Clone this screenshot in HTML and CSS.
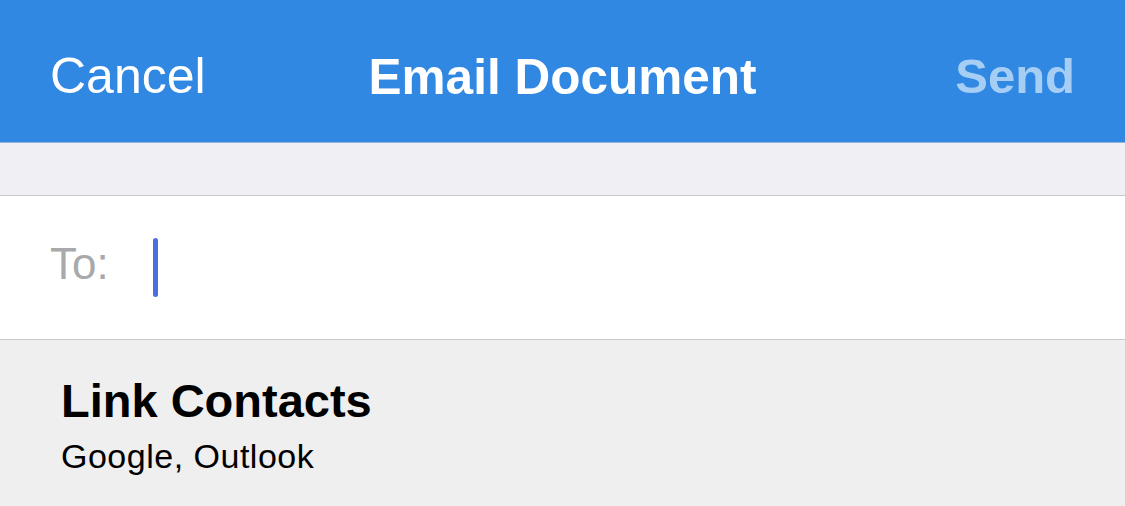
FILE: index.html
```html
<!DOCTYPE html>
<html lang="en">

<head>
  <meta charset="UTF-8">
  <meta name="viewport" content="width=device-width, initial-scale=1.0">
  <title>Email Document</title>
  <link rel="stylesheet" href="styles.css">
</head>

<body>
  <header class="nav-bar">
    <button class="nav-button cancel">Cancel</button>
    <h1 class="nav-title">Email Document</h1>
    <button class="nav-button send" disabled>Send</button>
  </header>

  <div class="spacer"></div>

  <div class="to-row">
    <span class="to-label">To:</span>
    <span class="cursor"></span>
  </div>

  <div class="suggestion">
    <div class="suggestion-title">Link Contacts</div>
    <div class="suggestion-sub">Google, Outlook</div>
  </div>
</body>

</html>
```

FILE: styles.css
```css
body {
  margin: 0;
  padding: 0;
  background-color: #efefef;
  font-family: 'Liberation Sans', Arial, sans-serif;
  color: #000;
}

.nav-bar {
  height: 143px;
  box-sizing: border-box;
  padding: 10px 50px 0 50px;
  background-color: #3088e3;
  border-bottom: 1px solid #8fb4dc;
  display: grid;
  grid-template-columns: 1fr auto 1fr;
  align-items: center;
}

.nav-button {
  background: none;
  border: none;
  padding: 0;
  color: #fff;
  font-family: inherit;
  font-size: 50px;
}

.nav-button.cancel {
  justify-self: start;
}

.nav-button.send {
  justify-self: end;
  color: #a6cef5;
  font-weight: bold;
  font-size: 49px;
}

.nav-title {
  margin: 0;
  color: #fff;
  font-size: 49.5px;
  font-weight: bold;
}

.spacer {
  height: 52px;
  background-color: #efeff4;
  border-bottom: 1px solid #c8c7cc;
}

.to-row {
  height: 144px;
  box-sizing: border-box;
  padding: 0 50px;
  background-color: #fff;
  border-bottom: 1px solid #c8c7cc;
  display: flex;
  align-items: center;
  gap: 44px;
}

.to-label {
  color: #a9a9ab;
  font-size: 44px;
  margin-top: -8px;
}

.cursor {
  width: 5px;
  height: 59px;
  border-radius: 3px;
  background-color: #4a6fe3;
}

.suggestion {
  padding: 34px 61px;
}

.suggestion-title {
  font-size: 47px;
  font-weight: bold;
  line-height: 54px;
}

.suggestion-sub {
  font-size: 34px;
  line-height: 42px;
  margin-top: 7px;
  letter-spacing: 0.5px;
}
```
